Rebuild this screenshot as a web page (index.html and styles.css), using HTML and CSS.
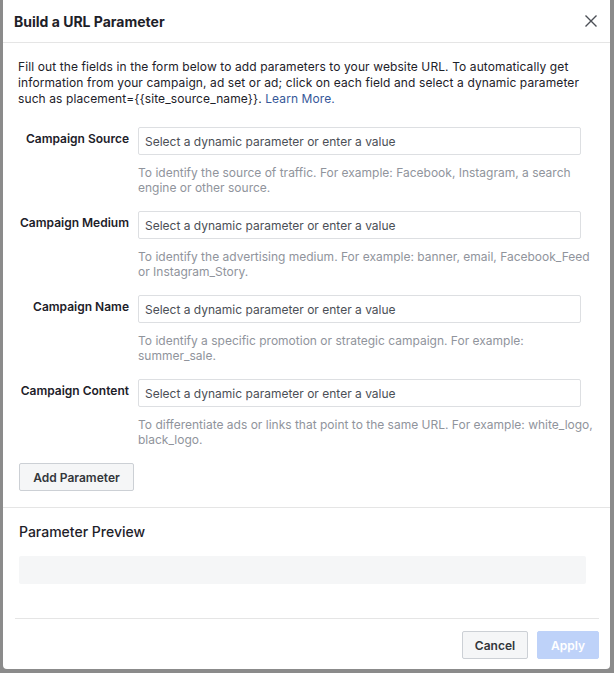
FILE: index.html
```html
<!DOCTYPE html>
<html lang="en">
<head>
    <meta charset="UTF-8" />
    <meta name="viewport" content="width=device-width, initial-scale=1.0" />
    <title>Build a URL Parameter</title>
    <link rel="stylesheet" href="styles.css">
</head>
<body>
    <div class="dialog">
        <div class="dialog-header">
            <h1 class="dialog-title">Build a URL Parameter</h1>
            <button class="close-btn" aria-label="Close">
                <svg width="12" height="12" viewBox="0 0 12 12">
                    <path d="M0.5 0.5 L11.5 11.5 M11.5 0.5 L0.5 11.5" stroke="#4b4f56" stroke-width="1.4" fill="none" />
                </svg>
            </button>
        </div>

        <div class="dialog-body">
            <p class="intro">Fill out the fields in the form below to add parameters to your website URL. To automatically get information from your campaign, ad set or ad; click on each field and select a dynamic parameter such as placement={{site_source_name}}. <a href="#" class="learn-more">Learn More.</a></p>

            <div class="fields">
                <div class="field-row">
                    <label class="field-label" for="source">Campaign Source</label>
                    <div class="field-main">
                        <input type="text" id="source" class="field-input" placeholder="Select a dynamic parameter or enter a value" />
                        <p class="field-help">To identify the source of traffic. For example: Facebook, Instagram, a search engine or other source.</p>
                    </div>
                </div>
                <div class="field-row">
                    <label class="field-label" for="medium">Campaign Medium</label>
                    <div class="field-main">
                        <input type="text" id="medium" class="field-input" placeholder="Select a dynamic parameter or enter a value" />
                        <p class="field-help">To identify the advertising medium. For example: banner, email, Facebook_Feed or Instagram_Story.</p>
                    </div>
                </div>
                <div class="field-row">
                    <label class="field-label" for="name">Campaign Name</label>
                    <div class="field-main">
                        <input type="text" id="name" class="field-input" placeholder="Select a dynamic parameter or enter a value" />
                        <p class="field-help">To identify a specific promotion or strategic campaign. For example: summer_sale.</p>
                    </div>
                </div>
                <div class="field-row">
                    <label class="field-label" for="content">Campaign Content</label>
                    <div class="field-main">
                        <input type="text" id="content" class="field-input" placeholder="Select a dynamic parameter or enter a value" />
                        <p class="field-help">To differentiate ads or links that point to the same URL. For example: white_logo, black_logo.</p>
                    </div>
                </div>
            </div>

            <button type="button" class="btn add-btn">Add Parameter</button>
        </div>

        <div class="preview-section">
            <h2 class="preview-title">Parameter Preview</h2>
            <div class="preview-box"></div>
        </div>

        <div class="dialog-footer">
            <button type="button" class="btn cancel-btn">Cancel</button>
            <button type="button" class="btn apply-btn" disabled>Apply</button>
        </div>
    </div>
</body>
</html>
```

FILE: styles.css
```css
body {
    font-family: Inter, 'Liberation Sans', Arial, sans-serif;
    background-color: #8b8b8b;
    margin: 0;
    padding: 0;
    color: #1d2129;
    font-size: 12px;
}
.dialog {
    background: #fff;
    margin: 0 4px 0 3px;
    height: 669px;
    border-radius: 0 0 4px 4px;
    display: flex;
    flex-direction: column;
}
.dialog-header {
    display: flex;
    justify-content: space-between;
    align-items: center;
    height: 42px;
    padding: 0 13px 0 11px;
    border-bottom: 1px solid #e5e5e5;
}
.dialog-title {
    margin: 0;
    font-size: 14px;
    font-weight: 700;
    color: #1d2129;
}
.close-btn {
    background: none;
    border: none;
    padding: 0;
    width: 12px;
    height: 12px;
    display: flex;
    cursor: pointer;
}
.dialog-body {
    padding: 16px 10px 16px 15px;
    border-bottom: 1px solid #e5e5e5;
}
.intro {
    margin: 0;
    line-height: 16px;
    padding-right: 14px;
    letter-spacing: 0.1px;
}
.learn-more {
    color: #365899;
    text-decoration: none;
}
.fields {
    margin-top: 20px;
}
.field-row {
    display: grid;
    grid-template-columns: 111px 1fr;
    column-gap: 9px;
    margin-bottom: 16px;
}
.field-label {
    text-align: right;
    font-weight: 600;
    padding-top: 4px;
    line-height: 16px;
    white-space: nowrap;
}
.field-input {
    display: block;
    box-sizing: border-box;
    width: 443px;
    height: 28px;
    border: 1px solid #dddfe2;
    border-radius: 2px;
    padding: 0 6px;
    font-family: inherit;
    font-size: 12px;
    color: #1d2129;
}
.field-input::placeholder {
    color: #4b4f56;
}
.field-help {
    margin: 10px 0 0 0;
    line-height: 15px;
    color: #90949c;
}
.btn {
    box-sizing: border-box;
    height: 28px;
    border-radius: 2px;
    font-family: inherit;
    font-size: 12px;
    font-weight: 600;
    cursor: pointer;
}
.add-btn {
    margin-left: 1px;
    width: 115px;
    background-color: #f5f6f7;
    border: 1px solid #ccd0d5;
    color: #33363b;
}
.preview-section {
    padding: 15px 24px 34px 16px;
}
.preview-title {
    margin: 0;
    font-size: 14px;
    font-weight: 500;
    line-height: 18px;
    color: #1d2129;
}
.preview-box {
    margin-top: 15px;
    height: 28px;
    background: #f5f6f7;
    border-radius: 2px;
}
.dialog-footer {
    display: flex;
    justify-content: flex-end;
    gap: 9px;
    margin: 0 11px 0 12px;
    padding-top: 12px;
    border-top: 1px solid #e5e5e5;
}
.cancel-btn {
    width: 66px;
    background-color: #f5f6f7;
    border: 1px solid #ccd0d5;
    color: #33363b;
}
.apply-btn {
    width: 62px;
    background-color: #bed2f9;
    border: 1px solid #bed2f9;
    color: #fff;
    cursor: default;
}
```
